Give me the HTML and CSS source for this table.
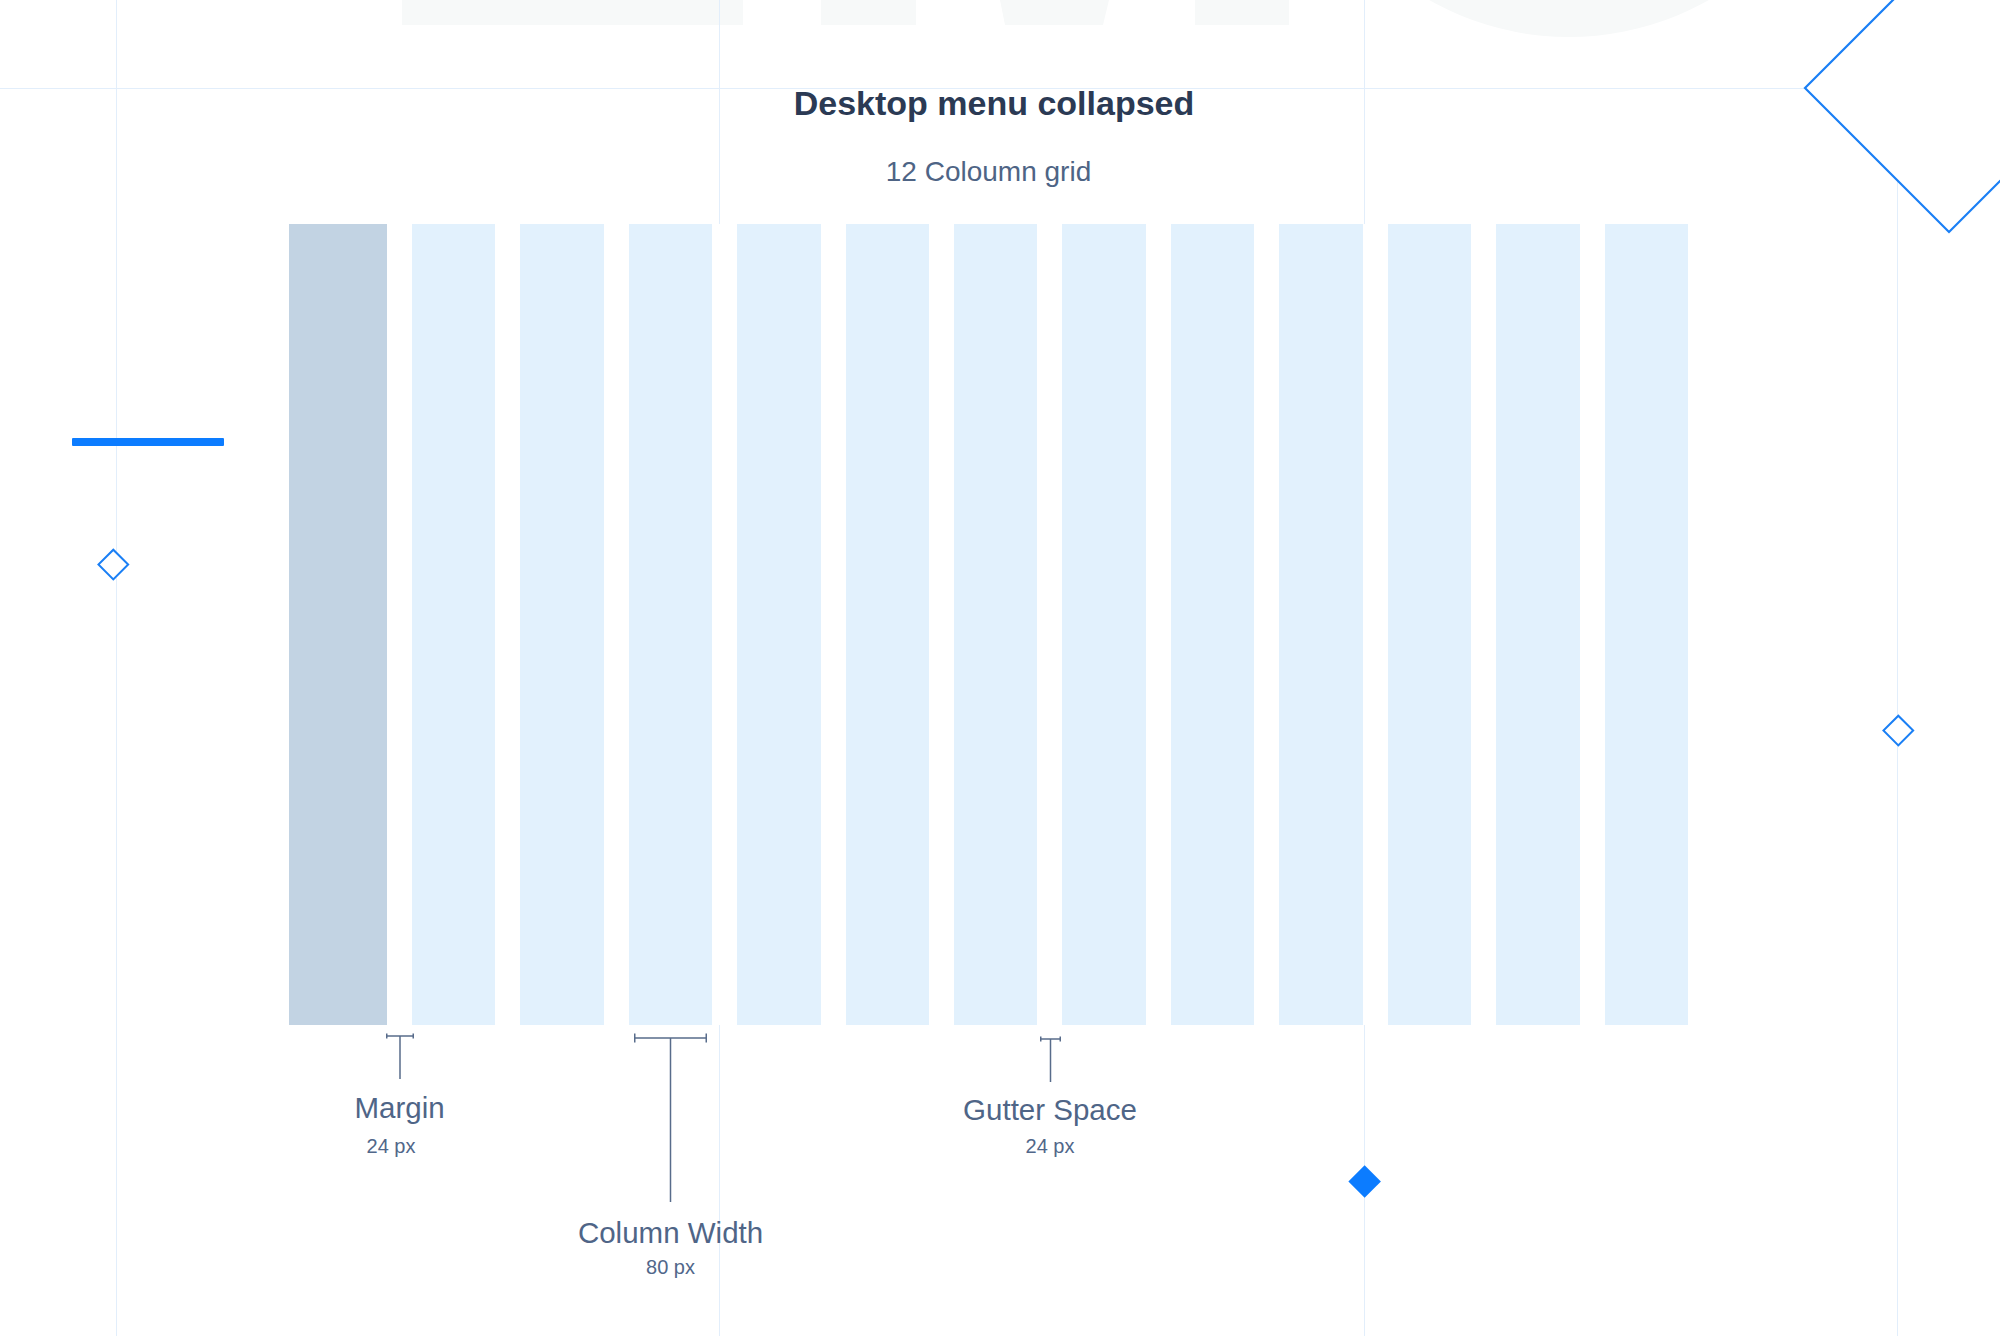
FILE: index.html
```html
<!DOCTYPE html>
<html lang="en">
<head>
<meta charset="utf-8">
<title>Desktop menu collapsed</title>
<link rel="stylesheet" href="styles.css">
</head>
<body>
<div class="canvas">
  <svg class="backdrop-letters" width="2000" height="60" viewBox="0 0 2000 60" aria-hidden="true">
    <rect x="402" y="-10" width="341" height="35"/>
    <rect x="821" y="-10" width="95" height="35"/>
    <polygon points="1000,0 1109,0 1103,25 1005,25"/>
    <rect x="1195" y="-10" width="94" height="35"/>
    <circle cx="1569" cy="-246" r="283"/>
  </svg>

  <div class="guide guide-h"></div>
  <div class="guide guide-v guide-v1"></div>
  <div class="guide guide-v guide-v2"></div>
  <div class="guide guide-v guide-v3"></div>
  <div class="guide guide-v guide-v4"></div>

  <main class="board">
    <header class="heading">
      <h1 class="title">Desktop menu collapsed</h1>
      <p class="subtitle">12 Coloumn grid</p>
    </header>

    <section class="grid">
      <div class="col col-menu"></div>
      <div class="col"></div>
      <div class="col"></div>
      <div class="col"></div>
      <div class="col"></div>
      <div class="col"></div>
      <div class="col"></div>
      <div class="col"></div>
      <div class="col"></div>
      <div class="col"></div>
      <div class="col"></div>
      <div class="col"></div>
      <div class="col"></div>
    </section>

    <section class="notes">
      <div class="note note-margin">
        <svg class="bracket" width="28" height="46" viewBox="0 0 28 46">
          <path d="M0.75 3H27.25M0.75 0.5V5.5M27.25 0.5V5.5M14 3V46"/>
        </svg>
        <div class="note-label">Margin</div>
        <div class="note-value note-value-nudge">24 px</div>
      </div>
      <div class="note note-column">
        <svg class="bracket" width="73" height="169" viewBox="0 0 73 169">
          <path d="M0.75 5H72.25M0.75 0.5V9.5M72.25 0.5V9.5M36.5 5V169"/>
        </svg>
        <div class="note-label">Column Width</div>
        <div class="note-value">80 px</div>
      </div>
      <div class="note note-gutter">
        <svg class="bracket" width="21" height="46" viewBox="0 0 21 46">
          <path d="M0.75 3H20.25M0.75 0.5V5.5M20.25 0.5V5.5M10.5 3V46"/>
        </svg>
        <div class="note-label">Gutter Space</div>
        <div class="note-value">24 px</div>
      </div>
    </section>
  </main>

  <div class="accent-bar"></div>
  <div class="diamond diamond-left"></div>
  <div class="diamond diamond-right"></div>
  <div class="diamond diamond-filled"></div>

  <svg class="big-diamond" width="2000" height="260" viewBox="0 0 2000 260" aria-hidden="true">
    <polygon points="1805,88 2105,-212 2249,-68 1949,232"/>
  </svg>
</div>
</body>
</html>
```

FILE: styles.css
```css
* {
  box-sizing: border-box;
}

html, body {
  margin: 0;
  padding: 0;
  background: #ffffff;
}

body {
  font-family: "Liberation Sans", Arial, Helvetica, sans-serif;
  overflow: hidden;
}

.canvas {
  position: relative;
  width: 2000px;
  height: 1336px;
  overflow: hidden;
  background: #ffffff;
}

/* faint giant lettering at the top */
.backdrop-letters {
  position: absolute;
  left: 0;
  top: 0;
  fill: #f7f9f9;
}

/* guide lines */
.guide {
  position: absolute;
  background: #e2eefb;
}

.guide-h {
  left: 0;
  top: 88px;
  width: 2000px;
  height: 1px;
}

.guide-v {
  top: 0;
  width: 1px;
  height: 1336px;
}

.guide-v1 { left: 116px; }
.guide-v2 { left: 719px; }
.guide-v3 { left: 1364px; }
.guide-v4 { left: 1897px; }

/* main board */
.board {
  position: relative;
  z-index: 1;
  width: 1399px;
  margin-left: 289px;
  padding-top: 83px;
}

.heading {
  display: flex;
  flex-direction: column;
  align-items: center;
}

.title {
  margin: 0;
  padding-left: 11px;
  font-size: 34px;
  line-height: 40px;
  font-weight: 700;
  color: #2b3a54;
}

.subtitle {
  margin: 33px 0 0;
  font-size: 28px;
  line-height: 32px;
  color: #4e6485;
}

.grid {
  margin-top: 36px;
  height: 801px;
  display: grid;
  grid-template-columns: 98px repeat(12, minmax(0, 1fr));
  column-gap: 25px;
  background: #ffffff;
}

.col {
  background: #e2f1fd;
}

.col-menu {
  background: #c2d3e3;
}

/* annotations */
.notes {
  display: grid;
  grid-template-columns: 98px repeat(12, 25px minmax(0, 1fr));
}

.note {
  grid-row: 1;
  min-width: 0;
  display: flex;
  flex-direction: column;
  align-items: center;
  white-space: nowrap;
}

.note-margin {
  grid-column: 2;
  padding-top: 8px;
}

.note-column {
  grid-column: 7;
  padding-top: 8px;
}

.note-gutter {
  grid-column: 14;
  padding-top: 11px;
}

.bracket {
  display: block;
  flex: none;
  fill: none;
  stroke: #586c8b;
  stroke-width: 1.5;
}

.note-label {
  flex: none;
  font-size: 29.5px;
  line-height: 34px;
  color: #4f6587;
}

.note-value {
  flex: none;
  font-size: 20px;
  line-height: 24px;
  color: #51678a;
}

.note-margin .note-label { margin-top: 12px; }
.note-margin .note-value { margin-top: 9px; }
.note-column .note-label { margin-top: 14px; }
.note-column .note-value { margin-top: 5px; }
.note-gutter .note-label { margin-top: 11px; }
.note-gutter .note-value { margin-top: 7px; }

.note-value-nudge {
  margin-right: 17px;
}

/* blue accents */
.accent-bar {
  position: absolute;
  z-index: 2;
  left: 72px;
  top: 438px;
  width: 152px;
  height: 8px;
  background: #0c7cff;
  border-radius: 1px;
}

.diamond {
  position: absolute;
  z-index: 2;
  width: 22.6px;
  height: 22.6px;
  transform: rotate(45deg);
  background: #ffffff;
  border: 2px solid #1a7ff5;
}

.diamond-left {
  left: 102.2px;
  top: 553.2px;
}

.diamond-right {
  left: 1886.7px;
  top: 719.2px;
}

.diamond-filled {
  left: 1353.3px;
  top: 1170.3px;
  width: 23.3px;
  height: 23.3px;
  background: #0c7cff;
  border: none;
}

.big-diamond {
  position: absolute;
  z-index: 2;
  left: 0;
  top: 0;
  fill: #ffffff;
  stroke: #1a7ff5;
  stroke-width: 2.2;
}
```
